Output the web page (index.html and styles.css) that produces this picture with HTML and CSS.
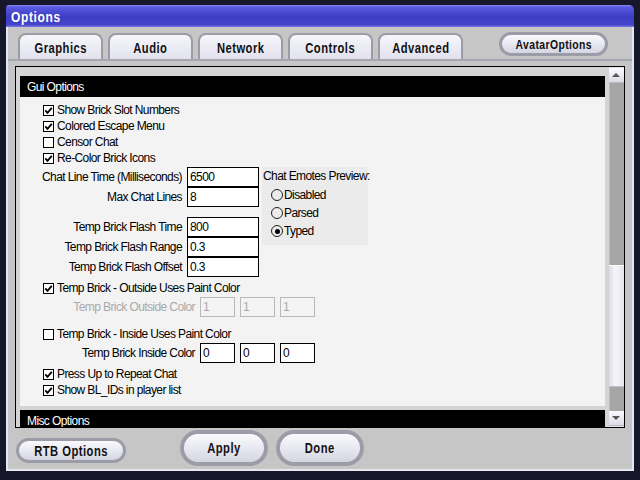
FILE: index.html
```html
<!DOCTYPE html>
<html>
<head>
<meta charset="utf-8">
<link rel="stylesheet" href="styles.css">
</head>
<body>
<div class="desktop">
  <div class="window">
    <div class="titlebar"><span class="title narrow">Options</span></div>
    <div class="wbody">
      <div class="tabs">
        <div class="tab"><span class="narrow">Graphics</span></div>
        <div class="tab"><span class="narrow">Audio</span></div>
        <div class="tab"><span class="narrow">Network</span></div>
        <div class="tab"><span class="narrow">Controls</span></div>
        <div class="tab"><span class="narrow">Advanced</span></div>
        <div class="pill avatar"><span class="narrow">AvatarOptions</span></div>
      </div>
      <div class="frame">
        <div class="scrollarea">
          <div class="section-head">Gui Options</div>
          <div class="section-body">
            <div class="cbrow"><span class="cb on"><svg viewBox="0 0 9 9"><polyline points="1.3,4.3 3.5,6.8 7.8,1.8"/></svg></span>Show Brick Slot Numbers</div>
            <div class="cbrow"><span class="cb on"><svg viewBox="0 0 9 9"><polyline points="1.3,4.3 3.5,6.8 7.8,1.8"/></svg></span>Colored Escape Menu</div>
            <div class="cbrow"><span class="cb"></span>Censor Chat</div>
            <div class="cbrow"><span class="cb on"><svg viewBox="0 0 9 9"><polyline points="1.3,4.3 3.5,6.8 7.8,1.8"/></svg></span>Re-Color Brick Icons</div>

            <div class="fields">
              <div class="fieldcol">
                <div class="field"><span class="flabel">Chat Line Time (Milliseconds)</span><span class="box">6500</span></div>
                <div class="field"><span class="flabel">Max Chat Lines</span><span class="box">8</span></div>
                <div class="field gap"><span class="flabel">Temp Brick Flash Time</span><span class="box">800</span></div>
                <div class="field"><span class="flabel">Temp Brick Flash Range</span><span class="box">0.3</span></div>
                <div class="field"><span class="flabel">Temp Brick Flash Offset</span><span class="box">0.3</span></div>
              </div>
              <div class="group">
                <div class="glabel">Chat Emotes Preview:</div>
                <div class="radio"><span class="rb"></span>Disabled</div>
                <div class="radio"><span class="rb"></span>Parsed</div>
                <div class="radio"><span class="rb on"></span>Typed</div>
              </div>
            </div>

            <div class="cbrow mt3"><span class="cb on"><svg viewBox="0 0 9 9"><polyline points="1.3,4.3 3.5,6.8 7.8,1.8"/></svg></span>Temp Brick - Outside Uses Paint Color</div>
            <div class="colorrow disabled"><span class="clabel">Temp Brick Outside Color</span><span class="sbox">1</span><span class="sbox">1</span><span class="sbox">1</span></div>
            <div class="cbrow mt9"><span class="cb"></span>Temp Brick - Inside Uses Paint Color</div>
            <div class="colorrow"><span class="clabel">Temp Brick Inside Color</span><span class="sbox">0</span><span class="sbox">0</span><span class="sbox">0</span></div>
            <div class="cbrow mt3"><span class="cb on"><svg viewBox="0 0 9 9"><polyline points="1.3,4.3 3.5,6.8 7.8,1.8"/></svg></span>Press Up to Repeat Chat</div>
            <div class="cbrow"><span class="cb on"><svg viewBox="0 0 9 9"><polyline points="1.3,4.3 3.5,6.8 7.8,1.8"/></svg></span>Show BL_IDs in player list</div>
          </div>
          <div class="section-head misc">Misc Options</div>
        </div>
        <div class="scrollbar">
          <div class="sb-btn"><svg viewBox="0 0 14 14"><polygon points="3,9 11,9 7,5"/></svg></div>
          <div class="sb-track top"></div>
          <div class="sb-thumb"></div>
          <div class="sb-track bottom"></div>
          <div class="sb-btn"><svg viewBox="0 0 14 14"><polygon points="3,5 11,5 7,9"/></svg></div>
        </div>
      </div>
      <div class="actions">
        <div class="pill rtb"><span class="narrow">RTB Options</span></div>
        <div class="pill big apply"><span class="narrow">Apply</span></div>
        <div class="pill big done"><span class="narrow">Done</span></div>
      </div>
    </div>
  </div>
</div>
</body>
</html>
```

FILE: styles.css
```css
html, body {
  margin: 0;
  padding: 0;
}
body {
  width: 640px;
  height: 480px;
  overflow: hidden;
  background: #17172c;
  font-family: "Liberation Sans", Arial, sans-serif;
}
.desktop {
  padding: 5px 0 0 6px;
}
.window {
  width: 628px;
  height: 466px;
  display: flex;
  flex-direction: column;
}
.narrow {
  display: inline-block;
  font-family: "Liberation Sans", Arial, sans-serif;
  font-weight: bold;
  transform: scaleX(0.8);
  white-space: nowrap;
}
.titlebar {
  height: 22px;
  box-sizing: border-box;
  border-radius: 3px 5px 0 0;
  background: linear-gradient(#8c8cf4 0, #5a5ae0 2px, #3c3cc4 55%, #4646cc 90%, #7878e8 100%);
  display: flex;
  align-items: center;
  padding-left: 5px;
}
.title {
  font-size: 15px;
  letter-spacing: 0.8px;
  color: #ffffff;
  transform-origin: left center;
}
.wbody {
  flex: 1;
  background: #c6c6c6;
  border: 2px solid #e6e6ee;
  border-top: none;
  display: flex;
  flex-direction: column;
  padding-top: 6px;
}
.tabs {
  height: 26px;
  border-bottom: 2px solid #a6a6ae;
  display: flex;
  align-items: flex-end;
  padding-left: 10px;
  gap: 5px;
}
.tab {
  width: 85px;
  height: 26px;
  box-sizing: border-box;
  border: 2px solid #9c9ca6;
  border-bottom: none;
  border-radius: 8px 8px 0 0;
  background: linear-gradient(#f6f6fc, #e2e2ee);
  display: flex;
  align-items: center;
  justify-content: center;
  font-size: 14px;
  letter-spacing: 0.6px;
  color: #111;
  padding-top: 2px;
}
.pill {
  box-sizing: border-box;
  border: 3px solid #9c9ca8;
  background: linear-gradient(#fafafe, #e4e4ee 60%, #d6d6e2);
  display: flex;
  align-items: center;
  justify-content: center;
  color: #111;
}
.avatar {
  align-self: flex-start;
  margin-top: -1px;
  margin-left: 31px;
  width: 109px;
  height: 24px;
  border-radius: 12px;
  font-size: 13px;
  letter-spacing: 0.5px;
}
.frame {
  margin: 5px 7px 0 7px;
  height: 362px;
  box-sizing: border-box;
  border: 1px solid #000;
  display: flex;
  overflow: hidden;
}
.scrollarea {
  flex: 1;
  background: #d4d4d4;
  padding: 9px 4px 0 4px;
  overflow: hidden;
  font-size: 12px;
  letter-spacing: -0.6px;
  color: #000;
  white-space: nowrap;
}
.section-head {
  height: 21px;
  background: #000;
  color: #fff;
  display: flex;
  align-items: center;
  padding-left: 7px;
}
.section-head.misc {
  margin-top: 4px;
}
.section-body {
  background: #f3f3f3;
  padding: 5px 0 8px 0;
}
.cbrow {
  height: 16px;
  display: flex;
  align-items: center;
  padding-left: 23px;
}
.mt3 { margin-top: 3px; }
.mt9 { margin-top: 9px; }
.cb {
  width: 11px;
  height: 11px;
  box-sizing: border-box;
  border: 1px solid #000;
  background: #fff;
  margin-right: 3px;
  display: flex;
}
.cb svg {
  width: 9px;
  height: 9px;
}
.cb polyline {
  fill: none;
  stroke: #000;
  stroke-width: 1.9;
}
.fields {
  margin-top: 1px;
  display: flex;
  align-items: flex-start;
}
.field {
  height: 20px;
  display: flex;
  align-items: center;
}
.field.gap {
  margin-top: 10px;
}
.flabel {
  width: 162px;
  text-align: right;
  margin-right: 5px;
}
.box {
  width: 72px;
  height: 20px;
  box-sizing: border-box;
  border: 1px solid #000;
  background: #fff;
  padding-left: 2px;
  line-height: 18px;
}
.group {
  margin-left: 3px;
  width: 106px;
  height: 78px;
  box-sizing: border-box;
  background: #ebebeb;
  padding-left: 1px;
}
.glabel {
  height: 19px;
  line-height: 19px;
  white-space: nowrap;
}
.radio {
  height: 18px;
  display: flex;
  align-items: center;
  padding-left: 8px;
}
.rb {
  width: 12px;
  height: 12px;
  box-sizing: border-box;
  border: 1px solid #222;
  border-radius: 50%;
  margin-right: 1px;
  display: flex;
  align-items: center;
  justify-content: center;
}
.rb.on::after {
  content: "";
  width: 5px;
  height: 5px;
  border-radius: 50%;
  background: #000;
}
.colorrow {
  margin-top: 1px;
  height: 20px;
  display: flex;
  align-items: center;
}
.clabel {
  width: 175px;
  text-align: right;
  margin-right: 5px;
}
.sbox {
  width: 35px;
  height: 20px;
  box-sizing: border-box;
  border: 1px solid #000;
  background: #fff;
  padding-left: 2px;
  line-height: 18px;
  margin-right: 5px;
}
.colorrow.disabled {
  color: #a9a9a9;
}
.colorrow.disabled .sbox {
  border-color: #b8b8b8;
  background: transparent;
}
.scrollbar {
  width: 15px;
  background: #e4e4ec;
  display: flex;
  flex-direction: column;
  padding: 1px 0;
}
.sb-btn {
  height: 14px;
  background: linear-gradient(#fafafe, #dcdce8);
  border-bottom: 1px solid #b8b8c4;
  display: flex;
}
.sb-btn svg {
  width: 14px;
  height: 14px;
}
.sb-btn polygon {
  fill: #555;
}
.sb-track {
  background: #a6a6a6;
  border-left: 1px solid #bcbcbc;
}
.sb-track.top {
  height: 182px;
}
.sb-track.bottom {
  flex: 1;
}
.sb-thumb {
  height: 122px;
  background: linear-gradient(90deg, #dcdce6, #f4f4fa 40%, #e6e6f0);
  border-top: 1px solid #fff;
  border-bottom: 1px solid #c0c0cc;
  box-sizing: border-box;
}
.actions {
  flex: 1;
  display: flex;
  align-items: flex-start;
  padding-left: 8px;
}
.rtb {
  margin-top: 10px;
  width: 110px;
  height: 25px;
  border-radius: 13px;
  font-size: 14px;
  letter-spacing: 0.6px;
}
.big {
  margin-top: 2px;
  width: 88px;
  height: 36px;
  border-radius: 18px;
  border-width: 4px;
  font-size: 14px;
  letter-spacing: 0.6px;
}
.apply {
  margin-left: 54px;
}
.done {
  margin-left: 8px;
}
```
